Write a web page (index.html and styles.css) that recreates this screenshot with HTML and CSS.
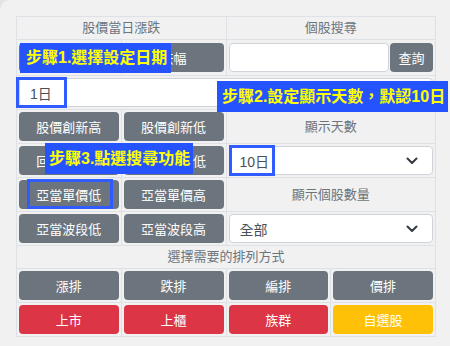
FILE: index.html
```html
<!DOCTYPE html>
<html lang="zh-Hant">
<head>
  <meta charset="UTF-8">
  <meta name="viewport" content="width=device-width, initial-scale=1.0">
  <title>股價篩選</title>
  <link rel="stylesheet" href="styles.css">
</head>
<body>
  <div class="panel">
    <table class="filter-table">
      <tr>
        <td colspan="2" class="caption">股價當日漲跌</td>
        <td colspan="2" class="caption">個股搜尋</td>
      </tr>
      <tr>
        <td><button type="button" class="btn btn-gray">漲幅</button></td>
        <td><button type="button" class="btn btn-gray">跌幅</button></td>
        <td colspan="2">
          <div class="search-group">
            <input type="text" class="search-input" aria-label="個股代號">
            <button type="button" class="btn btn-gray search-btn">查詢</button>
          </div>
        </td>
      </tr>
      <tr>
        <td colspan="4"><div class="field">1日</div></td>
      </tr>
      <tr>
        <td><button type="button" class="btn btn-gray">股價創新高</button></td>
        <td><button type="button" class="btn btn-gray">股價創新低</button></td>
        <td colspan="2" class="caption">顯示天數</td>
      </tr>
      <tr>
        <td><button type="button" class="btn btn-gray">回檔創新高</button></td>
        <td><button type="button" class="btn btn-gray">回檔創新低</button></td>
        <td colspan="2">
          <div class="field select">
            <span>10日</span>
            <svg width="12" height="8" viewBox="0 0 12 8"><path d="M1.5 1.5 L6 6 L10.5 1.5" fill="none" stroke="#343a40" stroke-width="2" stroke-linecap="round" stroke-linejoin="round"/></svg>
          </div>
        </td>
      </tr>
      <tr>
        <td><button type="button" class="btn btn-gray">亞當單價低</button></td>
        <td><button type="button" class="btn btn-gray">亞當單價高</button></td>
        <td colspan="2" class="caption">顯示個股數量</td>
      </tr>
      <tr>
        <td><button type="button" class="btn btn-gray">亞當波段低</button></td>
        <td><button type="button" class="btn btn-gray">亞當波段高</button></td>
        <td colspan="2">
          <div class="field select">
            <span>全部</span>
            <svg width="12" height="8" viewBox="0 0 12 8"><path d="M1.5 1.5 L6 6 L10.5 1.5" fill="none" stroke="#343a40" stroke-width="2" stroke-linecap="round" stroke-linejoin="round"/></svg>
          </div>
        </td>
      </tr>
      <tr>
        <td colspan="4" class="caption">選擇需要的排列方式</td>
      </tr>
      <tr>
        <td><button type="button" class="btn btn-gray">漲排</button></td>
        <td><button type="button" class="btn btn-gray">跌排</button></td>
        <td><button type="button" class="btn btn-gray">編排</button></td>
        <td><button type="button" class="btn btn-gray">價排</button></td>
      </tr>
      <tr>
        <td><button type="button" class="btn btn-red">上市</button></td>
        <td><button type="button" class="btn btn-red">上櫃</button></td>
        <td><button type="button" class="btn btn-red">族群</button></td>
        <td><button type="button" class="btn btn-yellow">自選股</button></td>
      </tr>
    </table>

    <!-- tutorial marks laid over the form -->
    <div class="mark mark-date"></div>
    <div class="mark mark-days"></div>
    <div class="mark mark-btn"></div>
    <div class="step step-1">步驟1.選擇設定日期</div>
    <div class="step step-2">步驟2.設定顯示天數，默認10日</div>
    <div class="step step-3">步驟3.點選搜尋功能</div>
  </div>
</body>
</html>
```

FILE: styles.css
```css
body {
  margin: 0;
  background-color: #e4e4e4;
  font-family: "Liberation Sans", "Noto Sans CJK TC", sans-serif;
}
.panel {
  position: relative;
  width: 450px;
  height: 346px;
  padding: 16px;
  box-sizing: border-box;
  background-color: #f1f1f1;
  border-top-left-radius: 10px;
  overflow: hidden;
}
.filter-table {
  width: 420px;
  table-layout: fixed;
  border-collapse: collapse;
}
.filter-table td {
  border: 1px solid #dee2e6;
  padding: 2px;
  text-align: center;
  font-size: 13px;
}
.caption {
  height: 18px;
  color: #6c757d;
  line-height: 18px;
}
.btn {
  display: block;
  width: 100%;
  height: 29px;
  border: none;
  border-radius: 4px;
  color: white;
  font-family: inherit;
  font-size: 13px;
  cursor: pointer;
}
.btn-gray {
  background-color: #6c757d;
}
.btn-red {
  background-color: #dc3545;
}
.btn-yellow {
  background-color: #ffc107;
}
.search-group {
  display: flex;
  gap: 1px;
  margin: 1px 0;
}
.search-input {
  flex-grow: 1;
  min-width: 0;
  height: 29px;
  box-sizing: border-box;
  border: 1px solid #ced4da;
  border-radius: 4px;
  background-color: white;
}
.search-btn {
  width: 43px;
  flex-shrink: 0;
}
.field {
  display: flex;
  align-items: center;
  height: 29px;
  padding: 0 10px;
  box-sizing: border-box;
  border: 1px solid #ced4da;
  border-radius: 4px;
  background-color: white;
  color: #495057;
  font-size: 14px;
  text-align: left;
}
.select {
  justify-content: space-between;
  padding-right: 14px;
}
.mark {
  position: absolute;
  border: 3px solid #2f5bff;
  box-sizing: border-box;
}
.mark-date {
  left: 16px;
  top: 77px;
  width: 51px;
  height: 31px;
}
.mark-days {
  left: 229px;
  top: 145px;
  width: 46px;
  height: 31px;
}
.mark-btn {
  left: 27px;
  top: 179px;
  width: 86px;
  height: 30px;
}
.step {
  position: absolute;
  box-sizing: border-box;
  height: 31px;
  padding-left: 6px;
  background-color: #2554ff;
  color: #ffff00;
  font-size: 16px;
  font-weight: bold;
  line-height: 31px;
  white-space: nowrap;
}
.step-1 {
  left: 20px;
  top: 43px;
  width: 151px;
  height: 30px;
  line-height: 30px;
}
.step-2 {
  left: 217px;
  top: 81px;
  width: 231px;
  padding-left: 5px;
}
.step-3 {
  left: 45px;
  top: 143px;
  width: 148px;
  padding-left: 4px;
}
```
